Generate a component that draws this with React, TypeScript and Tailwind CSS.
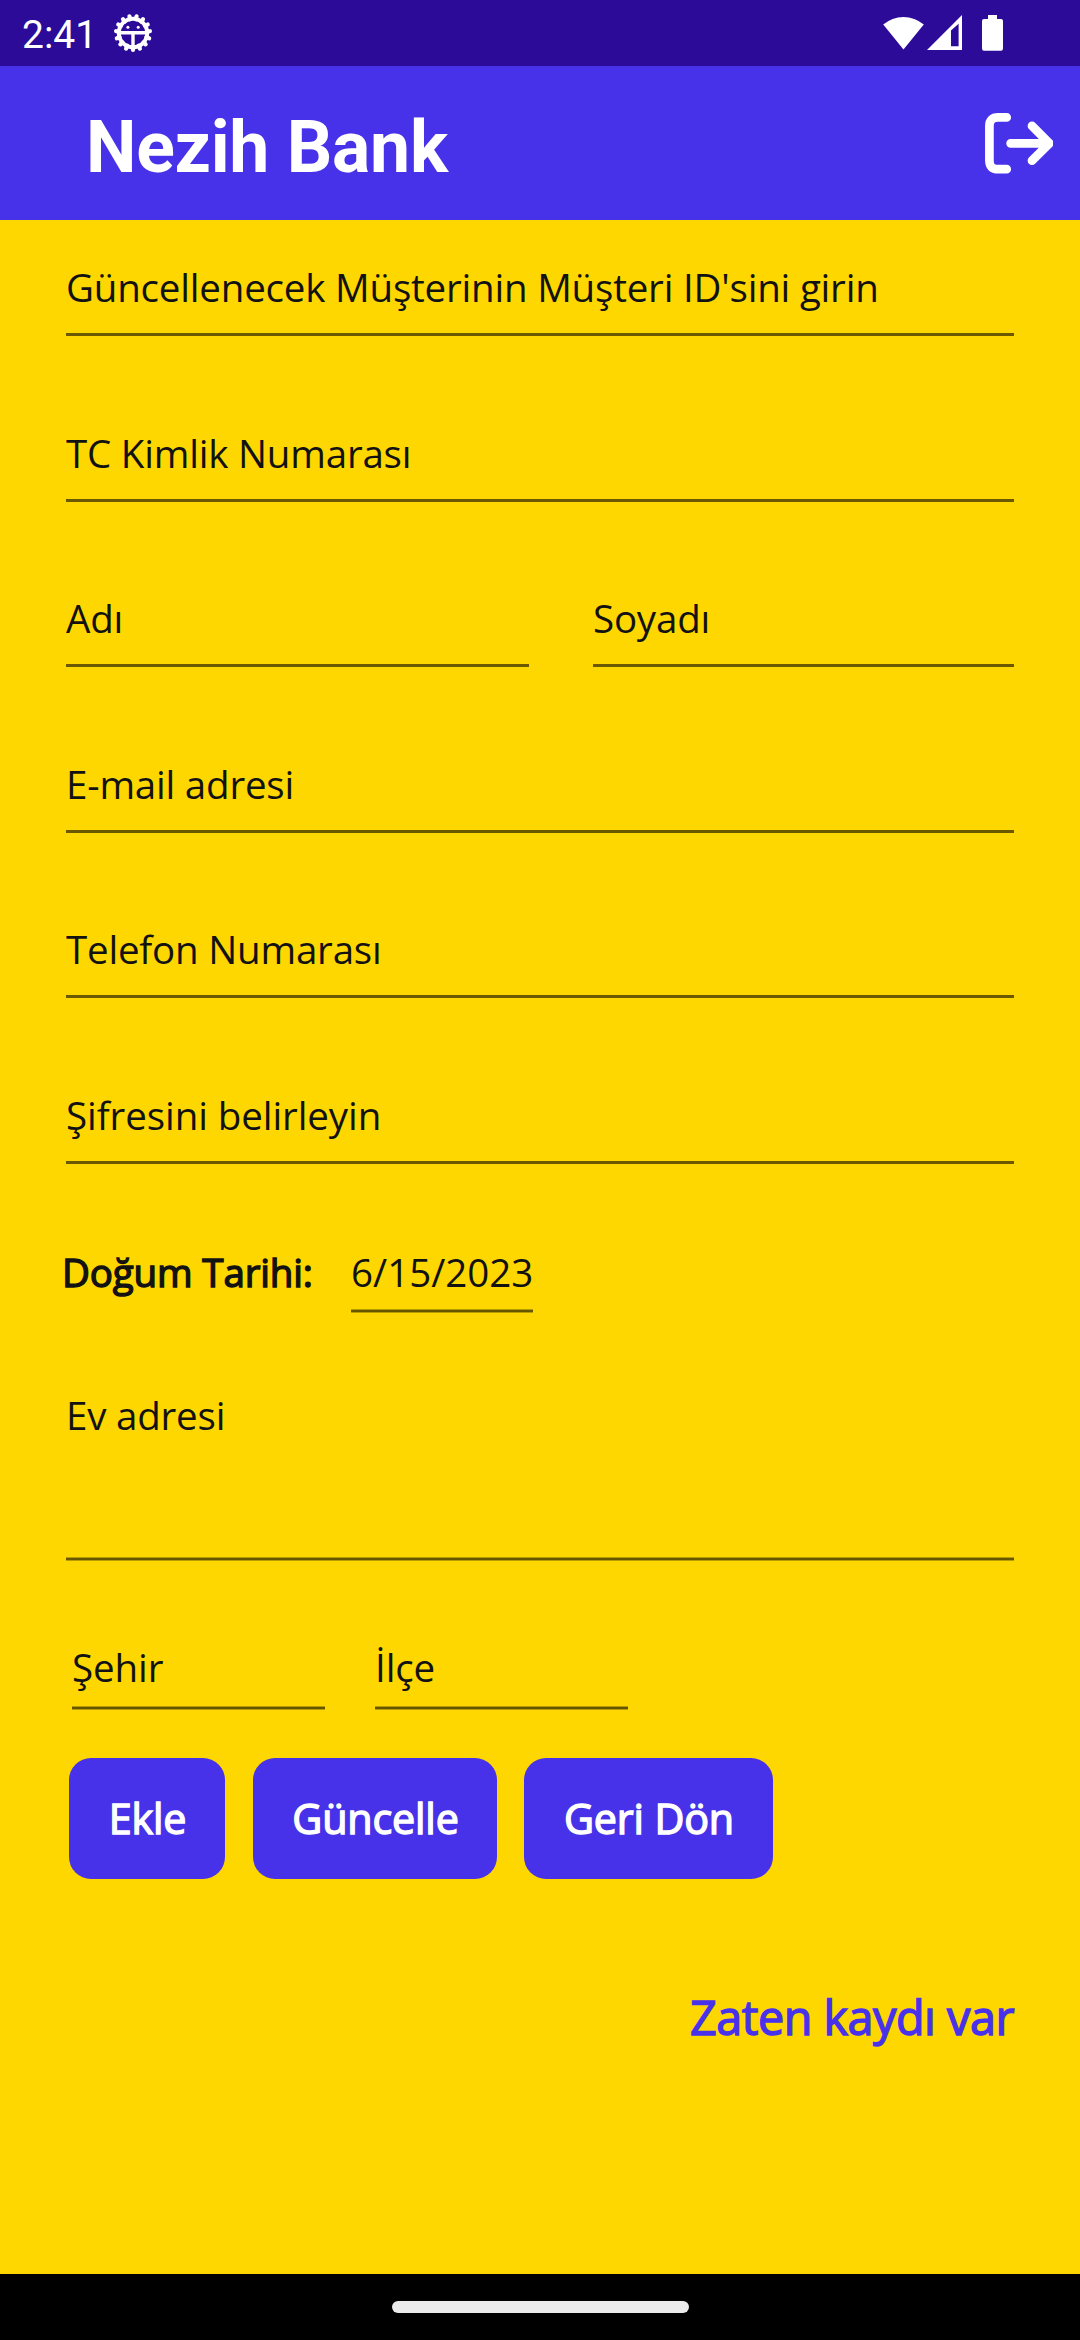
import type { ReactNode } from "react";

const boldRegular = "[-webkit-text-stroke:1.4px_currentColor]";

function GearIcon() {
  const teeth = Array.from({ length: 15 }, (_, i) => 90 + i * 24);
  return (
    <svg width="40" height="40" viewBox="-20 -20 40 40" className="block">
      {teeth.map((a) => (
        <line key={a} x1="14" y1="0" x2="17" y2="0" stroke="#fff" strokeWidth="4.2" strokeLinecap="round" transform={`rotate(${a})`} />
      ))}
      <circle r="14.2" fill="none" stroke="#fff" strokeWidth="4" />
      <path d="M-13 -0.3H13M0 0V14" stroke="#fff" strokeWidth="3.4" />
      <circle cx="-5.1" cy="-5.8" r="1.5" fill="#fff" />
      <circle cx="5.2" cy="-5.8" r="1.5" fill="#fff" />
    </svg>
  );
}

function StatusIcons() {
  return (
    <svg width="121" height="38" viewBox="883 14 121 38" className="block" fill="#fff">
      <path d="M883.2 24.6A31 31 0 0 1 923.8 24.6L903.5 49.4Z" />
      <path fillRule="evenodd" d="M927 50L962 15V50ZM951 30.6V46.2H958.6V23.8Z" />
      <path d="M988 15H997V19H1001Q1003 19 1003 21V48.500Q1003 50.700 1001 50.700H984Q982 50.700 982 48.500V21Q982 19 984 19H988Z" />
    </svg>
  );
}

function ExitIcon() {
  return (
    <svg width="68" height="61" viewBox="985 113 68 61" className="block" fill="none" stroke="#fff" strokeWidth="8.7" strokeLinecap="round" strokeLinejoin="round">
      <path d="M1006.700 117.400H998Q989.400 117.400 989.400 126V160.600Q989.400 169.200 998 169.200H1006.700" />
      <path d="M1010.600 143.300H1048M1032 125.900L1049.400 143.300L1032 160.700" />
    </svg>
  );
}

function Field({ label, className = "" }: { label: string; className?: string }) {
  return (
    <div className={`border-b-[3px] border-[#6a5900] pb-5 tracking-[-0.2px] ${className}`}>
      <Label>{label}</Label>
    </div>
  );
}

function Label({ children }: { children: ReactNode }) {
  return <div className="h-[52px] whitespace-nowrap leading-[52px]">{children}</div>;
}

function SoftLine() {
  return <div className="h-1 border-y border-[#b89b00] bg-[#665600]" />;
}

function Button({ children, className }: { children: string; className: string }) {
  return (
    <button className={`h-[121px] whitespace-nowrap rounded-[22px] bg-[#4832e9] pl-px text-center text-[41.25px] leading-[121px] tracking-[-0.15px] text-white ${boldRegular} ${className}`}>
      {children}
    </button>
  );
}

export default function App() {
  return (
    <div className="flex h-[2340px] w-[1080px] flex-col overflow-hidden bg-[#ffd700] font-['Open_Sans',sans-serif] text-[38.5px] text-[#121212]">
      <div className="flex h-[66px] shrink-0 items-start justify-between bg-[#2b0b98] pl-[22px] pr-[76px] font-[Roboto,sans-serif] text-[39px] text-white">
        <div className="flex">
          <span className="w-[91px] pt-3 leading-[46px]">2:41</span>
          <div className="pt-[13px]">
            <GearIcon />
          </div>
        </div>
        <div className="pt-[14px]">
          <StatusIcons />
        </div>
      </div>

      <header className="flex h-[154px] shrink-0 items-center justify-between bg-[#4832e9] pl-[86px] pr-[27px] text-white">
        <h1 className="pt-2.5 font-[Roboto,sans-serif] text-[71.5px] font-bold leading-[84px] tracking-[-0.25px]">Nezih Bank</h1>
        <ExitIcon />
      </header>

      <main className="flex grow flex-col px-[66px] pt-[41px]">
        <Field label="Güncellenecek Müşterinin Müşteri ID'sini girin" />
        <Field label="TC Kimlik Numarası" className="mt-[91px]" />
        <div className="mt-[90px] flex justify-between">
          <Field label="Adı" className="w-[463px]" />
          <Field label="Soyadı" className="w-[421px]" />
        </div>
        <Field label="E-mail adresi" className="mt-[91px]" />
        <Field label="Telefon Numarası" className="mt-[90px]" />
        <div className="mt-[91px] border-b-[3px] border-[#6a5900] pb-5 tracking-[-0.08px]">
          <Label>Şifresini belirleyin</Label>
        </div>

        <div className="-ml-1 mt-[82px] flex">
          <div className={`w-[289px] tracking-[-0.15px] ${boldRegular}`}>
            <Label>Doğum Tarihi:</Label>
          </div>
          <div className="w-[182px]">
            <div className="h-[63px] leading-[52px]">6/15/2023</div>
            <SoftLine />
          </div>
        </div>

        <div className="mt-[76px] tracking-[-0.2px]">
          <div className="h-[168px]">
            <Label>Ev adresi</Label>
          </div>
          <SoftLine />
        </div>

        <div className="mt-20 flex gap-[50px] pl-1.5 tracking-[-0.1px]">
          {["Şehir", "İlçe"].map((label) => (
            <div key={label} className="w-[253px]">
              <div className="h-[65px]">
                <Label>{label}</Label>
              </div>
              <SoftLine />
            </div>
          ))}
        </div>

        <div className="mt-12 flex pl-[3px]">
          <Button className="w-[156px]">Ekle</Button>
          <Button className="ml-7 w-[244px]">Güncelle</Button>
          <Button className="ml-[27px] w-[249px]">Geri Dön</Button>
        </div>

        <div className={`mt-[106px] text-right text-[46.75px] leading-[64px] tracking-[-0.5px] text-[#4832e9] ${boldRegular}`}>Zaten kaydı var</div>
      </main>

      <footer className="flex h-[66px] shrink-0 justify-center bg-black pt-[27px]">
        <div className="h-3 w-[297px] rounded-full bg-[#ebebeb]" />
      </footer>
    </div>
  );
}
